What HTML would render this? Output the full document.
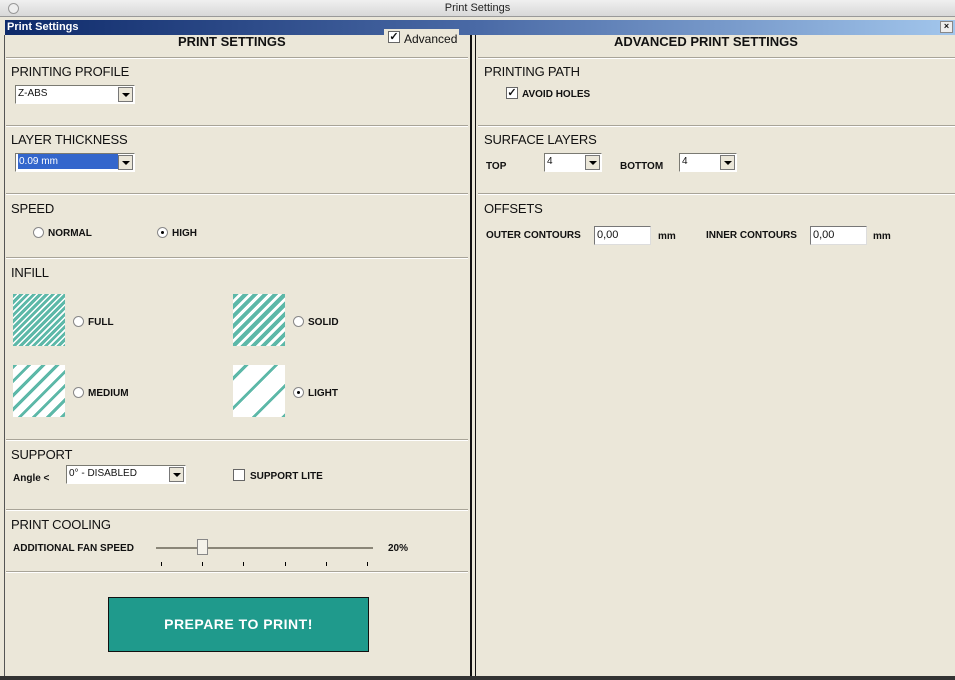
<!DOCTYPE html>
<html><head><style>
*{margin:0;padding:0;box-sizing:border-box}
body{width:955px;height:680px;position:relative;background:#ebe7d9;font-family:"Liberation Sans",sans-serif;overflow:hidden;color:#111}
.a{position:absolute}
.h{font-size:13px;font-weight:normal;letter-spacing:-0.2px}
.b{font-size:10px;font-weight:bold}
.hr{position:absolute;height:2px;border-top:1px solid #a8a498;border-bottom:1px solid #fff}
.sel{position:absolute;background:#fff;border:1px solid #7a7a72;border-right-color:#fff;border-bottom-color:#fff;font-size:10px;padding-left:2px;line-height:15px;height:19px}
.sel .ar{position:absolute;right:1px;top:1px;width:15px;height:15px;background:#ebe7d9;border:1px solid #777}
.sel .ar:after{content:"";position:absolute;left:3px;top:5px;border-left:4px solid transparent;border-right:4px solid transparent;border-top:4px solid #000}
.rad{position:absolute;width:11px;height:11px;border-radius:50%;background:#fff;border:1px solid #888}
.chk{position:absolute;width:12px;height:12px;background:#fff;border:1px solid #666;font-size:11px;line-height:10px;text-align:center;font-weight:bold}
.inp{position:absolute;background:#fff;border:1px solid #777;border-right-color:#ddd;border-bottom-color:#ddd;font-size:11px;padding-left:2px;line-height:16px;height:19px}
.pat{position:absolute;width:52px;height:52px}
</style></head><body>
<div class="a" style="left:0;top:0;width:955px;height:17px;background:linear-gradient(#f0f0f0,#d8d8d8);border-bottom:1px solid #999;font-size:11px;text-align:center;line-height:17px;color:#222">Print Settings</div>
<div class="a" style="left:8px;top:3px;width:11px;height:11px;border-radius:50%;border:1px solid #999;background:#eee"></div>
<div class="a" style="left:5px;top:20px;width:950px;height:15px;background:linear-gradient(90deg,#0e2a6a,#4a6aa6 50%,#a2c6ec)"></div>
<div class="a" style="left:7px;top:21px;color:#fff;font-weight:bold;font-size:11px">Print Settings</div>
<div class="a" style="left:940px;top:21px;width:13px;height:12px;background:#eee;border:1px solid #888;font-size:9px;line-height:9px;text-align:center;font-weight:bold">×</div>
<div class="a" style="left:0;top:35px;width:5px;height:645px;background:#ebe7d9;border-right:1px solid #555"></div>
<div class="a" style="left:470px;top:35px;width:2px;height:645px;background:#111"></div>
<div class="a" style="left:475px;top:35px;width:1px;height:645px;background:#111"></div>
<div class="a" style="left:0;top:676px;width:955px;height:4px;background:#333"></div>
<div class="a" style="left:384px;top:29px;width:75px;height:18px;background:#ebe7d9"></div>
<div class="chk" style="left:388px;top:31px">✓</div>
<div class="a" style="left:404px;top:32px;font-size:12px">Advanced</div>
<div class="a" style="left:178px;top:34px;font-size:13px;font-weight:bold">PRINT SETTINGS</div>
<div class="a" style="left:614px;top:34px;font-size:13px;font-weight:bold">ADVANCED PRINT SETTINGS</div>

<div class="hr" style="left:6px;top:57px;width:462px"></div>
<div class="hr" style="left:6px;top:125px;width:462px"></div>
<div class="hr" style="left:6px;top:193px;width:462px"></div>
<div class="hr" style="left:6px;top:257px;width:462px"></div>
<div class="hr" style="left:6px;top:439px;width:462px"></div>
<div class="hr" style="left:6px;top:509px;width:462px"></div>
<div class="hr" style="left:6px;top:571px;width:462px"></div>
<div class="hr" style="left:478px;top:57px;width:477px"></div>
<div class="hr" style="left:478px;top:125px;width:477px"></div>
<div class="hr" style="left:478px;top:193px;width:477px"></div>

<div class="a h" style="left:11px;top:64px">PRINTING PROFILE</div>
<div class="sel" style="left:15px;top:85px;width:120px">Z-ABS<div class="ar"></div></div>
<div class="a h" style="left:11px;top:132px">LAYER THICKNESS</div>
<div class="sel" style="left:15px;top:153px;width:120px"><span style="background:#3366cc;color:#fff;display:inline-block;width:100px;padding-left:1px">0.09 mm</span><div class="ar"></div></div>
<div class="a h" style="left:11px;top:201px">SPEED</div>
<div class="rad" style="left:33px;top:227px"></div><div class="a b" style="left:48px;top:228px">NORMAL</div>
<div class="rad" style="left:157px;top:227px"><div style="position:absolute;left:3px;top:3px;width:3px;height:3px;background:#000;border-radius:50%"></div></div><div class="a b" style="left:172px;top:228px">HIGH</div>
<div class="a h" style="left:11px;top:265px">INFILL</div>
<div class="pat" style="left:13px;top:294px;background:repeating-linear-gradient(135deg,#5db8a8 0 3px,#fff 3px 4.5px)"></div>
<div class="pat" style="left:233px;top:294px;background:repeating-linear-gradient(135deg,#5db8a8 0 4px,#fff 4px 7px)"></div>
<div class="pat" style="left:13px;top:365px;background:repeating-linear-gradient(135deg,#5db8a8 0 3px,#fff 3px 10px)"></div>
<div class="pat" style="left:233px;top:365px;background:repeating-linear-gradient(135deg,#fff 0 8px,#5db8a8 8px 11px,#fff 11px 21px)"></div>
<div class="rad" style="left:73px;top:316px"></div><div class="a b" style="left:88px;top:317px">FULL</div>
<div class="rad" style="left:293px;top:316px"></div><div class="a b" style="left:308px;top:317px">SOLID</div>
<div class="rad" style="left:73px;top:387px"></div><div class="a b" style="left:88px;top:388px">MEDIUM</div>
<div class="rad" style="left:293px;top:387px"><div style="position:absolute;left:3px;top:3px;width:3px;height:3px;background:#000;border-radius:50%"></div></div><div class="a b" style="left:308px;top:388px">LIGHT</div>
<div class="a h" style="left:11px;top:447px">SUPPORT</div>
<div class="a b" style="left:13px;top:473px">Angle &lt;</div>
<div class="sel" style="left:66px;top:465px;width:120px">0° - DISABLED<div class="ar"></div></div>
<div class="chk" style="left:233px;top:469px"></div><div class="a b" style="left:250px;top:471px">SUPPORT LITE</div>
<div class="a h" style="left:11px;top:517px">PRINT COOLING</div>
<div class="a b" style="left:13px;top:543px">ADDITIONAL FAN SPEED</div>
<div class="a" style="left:156px;top:547px;width:217px;height:2px;background:#8a8678"></div>
<div class="a" style="left:197px;top:539px;width:11px;height:16px;background:#f4f2ea;border:1px solid #888"></div>
<div class="a b" style="left:388px;top:543px">20%</div>
<div class="a" style="left:161px;top:562px;width:1px;height:4px;background:#000"></div>
<div class="a" style="left:202px;top:562px;width:1px;height:4px;background:#000"></div>
<div class="a" style="left:243px;top:562px;width:1px;height:4px;background:#000"></div>
<div class="a" style="left:285px;top:562px;width:1px;height:4px;background:#000"></div>
<div class="a" style="left:326px;top:562px;width:1px;height:4px;background:#000"></div>
<div class="a" style="left:367px;top:562px;width:1px;height:4px;background:#000"></div>
<div class="a" style="left:108px;top:597px;width:261px;height:55px;background:#1f9a8c;border:1px solid #111;color:#fff;font-weight:bold;font-size:14px;text-align:center;line-height:53px;letter-spacing:0.5px">PREPARE TO PRINT!</div>

<div class="a h" style="left:484px;top:64px">PRINTING PATH</div>
<div class="chk" style="left:506px;top:87px">✓</div><div class="a b" style="left:522px;top:89px">AVOID HOLES</div>
<div class="a h" style="left:484px;top:132px">SURFACE LAYERS</div>
<div class="a b" style="left:486px;top:161px">TOP</div>
<div class="sel" style="left:544px;top:153px;width:58px">4<div class="ar"></div></div>
<div class="a b" style="left:620px;top:161px">BOTTOM</div>
<div class="sel" style="left:679px;top:153px;width:58px">4<div class="ar"></div></div>
<div class="a h" style="left:484px;top:201px">OFFSETS</div>
<div class="a b" style="left:486px;top:230px">OUTER CONTOURS</div>
<div class="inp" style="left:594px;top:226px;width:57px">0,00</div>
<div class="a b" style="left:658px;top:231px">mm</div>
<div class="a b" style="left:706px;top:230px">INNER CONTOURS</div>
<div class="inp" style="left:810px;top:226px;width:57px">0,00</div>
<div class="a b" style="left:873px;top:231px">mm</div>
</body></html>
